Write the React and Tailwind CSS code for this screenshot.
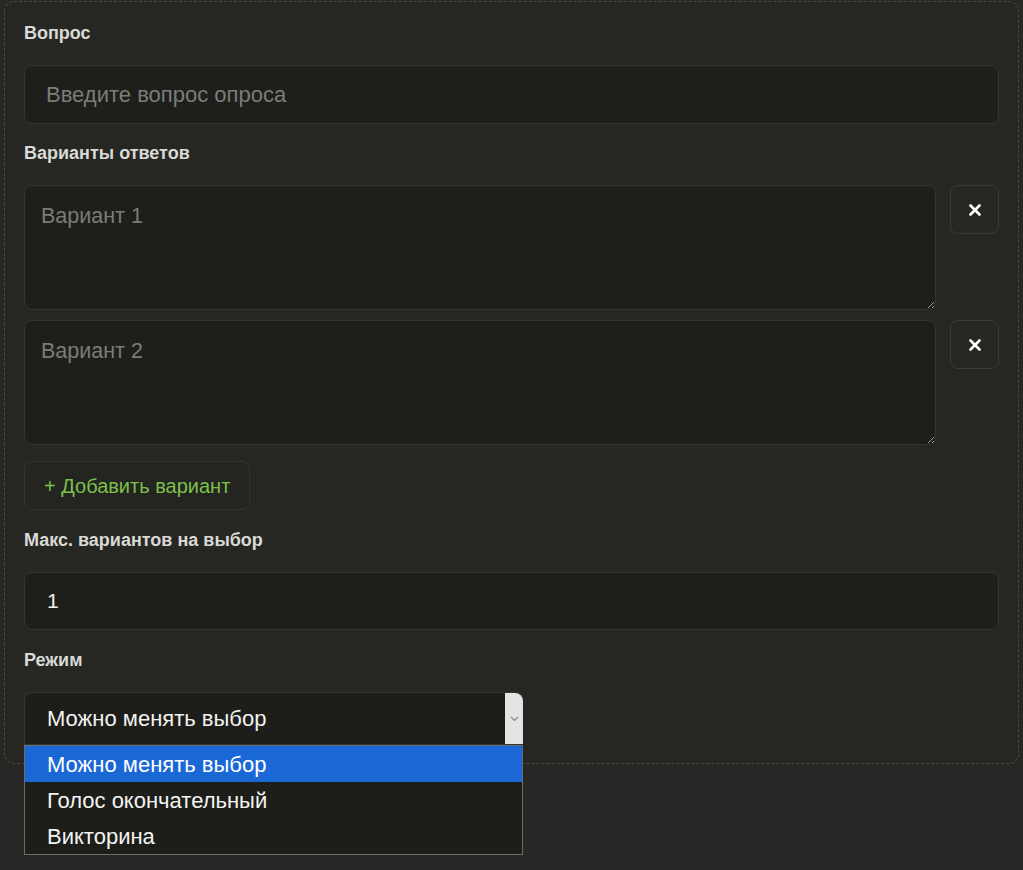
import { useState } from "react";

const options = ["Можно менять выбор", "Голос окончательный", "Викторина"];

function Label({ children }) {
  return (
    <div className="text-[18px] leading-6 font-bold text-[#d9d9d6] mb-5">
      {children}
    </div>
  );
}

function RemoveButton() {
  return (
    <button
      type="button"
      className="w-[49px] h-[49px] shrink-0 rounded-lg border border-[#3a3b36] bg-[#262723] flex items-center justify-center text-white"
    >
      <svg width="12" height="12" viewBox="0 0 12 12">
        <path d="M1.5 1.5 L10.5 10.5 M10.5 1.5 L1.5 10.5" stroke="currentColor" strokeWidth="2.6" strokeLinecap="round" />
      </svg>
    </button>
  );
}

export default function App() {
  const [question, setQuestion] = useState("");
  const [variants, setVariants] = useState(["", ""]);
  const [maxChoice, setMaxChoice] = useState("1");
  const mode = 0;

  return (
    <div
      className="min-h-[870px] bg-[#272825] pt-px px-1"
      style={{ fontFamily: "'Liberation Sans', Arial, sans-serif" }}
    >
      <div className="relative border border-dashed border-[#4a4b46] rounded-[10px] bg-[#262723] pt-[19px] pb-[18px] px-[19px]">
        {/* Question */}
        <Label>Вопрос</Label>
        <input
          value={question}
          onChange={(e) => setQuestion(e.target.value)}
          placeholder="Введите вопрос опроса"
          className="w-full h-[59px] rounded-lg border border-[#33352f] bg-[#1e1f1b] px-[21px] text-[22px] text-[#eeeeea] placeholder:text-[#7b7c78] outline-none"
        />

        {/* Variants */}
        <div className="mt-[17px]">
          <Label>Варианты ответов</Label>
          <div className="flex flex-col gap-[10px]">
            {variants.map((v, i) => (
              <div key={i} className="flex items-start gap-[14px]">
                <textarea
                  value={v}
                  onChange={(e) =>
                    setVariants((prev) => prev.map((p, j) => (j === i ? e.target.value : p)))
                  }
                  placeholder={`Вариант ${i + 1}`}
                  className="flex-1 h-[125px] rounded-lg border border-[#33352f] bg-[#1e1f1b] px-4 pt-[14px] text-[21.5px] text-[#eeeeea] placeholder:text-[#7b7c78] outline-none"
                />
                <RemoveButton />
              </div>
            ))}
          </div>
          <button
            type="button"
            onClick={() => setVariants((prev) => [...prev, ""])}
            className="mt-4 h-[49px] px-[19px] rounded-lg border border-[#33352f] bg-[#242521] text-[20px] text-[#7dbf4c]"
          >
            + Добавить вариант
          </button>
        </div>

        {/* Max choices */}
        <div className="mt-[18px]">
          <Label>Макс. вариантов на выбор</Label>
          <input
            value={maxChoice}
            onChange={(e) => setMaxChoice(e.target.value)}
            className="w-full h-[58px] rounded-lg border border-[#33352f] bg-[#1e1f1b] px-[22px] text-[21px] text-[#f3f2e6] outline-none"
          />
        </div>

        {/* Mode */}
        <div className="mt-[18px]">
          <Label>Режим</Label>
          <div className="relative w-[499px]">
            <div className="h-[53px] flex items-center rounded-t-lg border border-[#33352f] border-r-0 bg-[#1d1e1a] text-[22px] text-[#f2f2f0]">
              <span className="flex-1 pl-[22px]">{options[mode]}</span>
              <span className="w-[18px] h-full rounded-tr-lg bg-[#e4e4e4] flex items-center justify-center text-[#8a8a8a]">
                <svg width="9" height="6" viewBox="0 0 9 6">
                  <path d="M1 1 L4.5 4.5 L8 1" stroke="currentColor" strokeWidth="1.2" fill="none" />
                </svg>
              </span>
            </div>
            <ul className="absolute left-0 top-full w-full border border-[#6b6b6b] bg-[#1d1e1a] text-[22px] text-[#f4f4f2] z-10">
              {options.map((o, i) => (
                <li
                  key={o}
                  className={`h-9 flex items-center pl-[22px] ${i === mode ? "bg-[#1a68d6] text-white" : ""}`}
                >
                  {o}
                </li>
              ))}
            </ul>
          </div>
        </div>
      </div>
    </div>
  );
}
